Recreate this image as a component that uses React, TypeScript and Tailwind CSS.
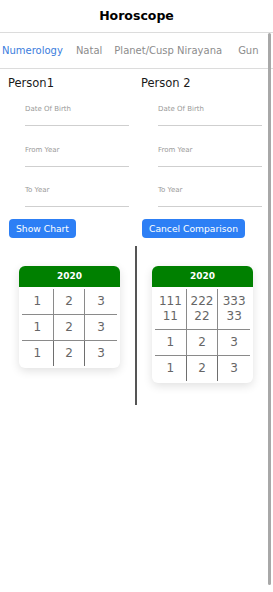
import React from "react";

// campos do formulário de cada pessoa
const campos = ["Date Of Birth", "From Year", "To Year"];

const Campo = ({ label, mt }: { label: string; mt: string }) => (
  <div className={`${mt} ml-[25px] mr-[4px] border-b border-[#cfcfcf] pb-[11px]`}>
    <div className="text-[7px] leading-[9px] text-[#9a9a9a]">{label}</div>
  </div>
);

const Pessoa = ({ nome, botao }: { nome: string; botao: string }) => (
  <div className="pl-[8px] pt-[7px]">
    <div className="text-[11.5px] leading-[14px] text-[#1a1a1a]">{nome}</div>
    <div className="-ml-[8px]">
      <Campo label={campos[0]} mt="mt-[15px]" />
      <Campo label={campos[1]} mt="mt-[20px]" />
      <Campo label={campos[2]} mt="mt-[19px]" />
    </div>
    <button className="mt-[12px] ml-[1px] h-[19px] rounded-[4px] bg-[#2d7ff5] px-[7px] text-[9.2px] leading-[19px] text-white">
      {botao}
    </button>
  </div>
);

// cartão com a grade numerológica
const Cartao = ({ linhas }: { linhas: string[][] }) => (
  <div className="w-[101px] overflow-hidden rounded-[6px] bg-white shadow-[0_3px_10px_rgba(0,0,0,0.12)]">
    <div className="flex h-[21px] items-center justify-center bg-[#008000] text-[9px] font-bold text-white">
      2020
    </div>
    <div className="grid grid-cols-3 px-[3px] pt-[2px] pb-[2px]">
      {linhas.map((linha, i) =>
        linha.map((valor, j) => (
          <div
            key={`${i}-${j}`}
            className={`flex items-center justify-center break-all px-[3px] py-[5px] text-center text-[12px] leading-[15px] text-[#666] ${
              j < 2 ? "border-r border-[#6e6e6e]" : ""
            } ${i < linha.length - 1 ? "border-b border-[#8a8a8a]" : ""}`}
          >
            {valor}
          </div>
        ))
      )}
    </div>
  </div>
);

export default function App() {
  const abas = ["Numerology", "Natal", "Planet/Cusp Nirayana", "Gun"];
  return (
    <div
      className="relative h-[592px] w-[273px] overflow-hidden bg-white"
      style={{ fontFamily: '"DejaVu Sans", sans-serif' }}
    >
      {/* Cabeçalho */}
      <header className="flex h-[33px] items-center justify-center border-b border-[#dcdcdc]">
        <h1 className="text-[12.5px] font-bold text-black">Horoscope</h1>
      </header>

      {/* Abas */}
      <nav className="flex h-[36px] items-center gap-[12px] border-b border-[#dcdcdc] pl-[2px] text-[10px] whitespace-nowrap">
        {abas.map((aba, i) => (
          <span
            key={aba}
            className={`${i === 0 ? "text-[#3b7ddd]" : "text-[#8c8c8c]"} ${i === 1 ? "ml-[1px]" : ""} ${i === 3 ? "ml-[4px]" : ""}`}
          >
            {aba}
          </span>
        ))}
      </nav>

      {/* Pessoas */}
      <div className="grid w-[266px] grid-cols-2">
        <Pessoa nome="Person1" botao="Show Chart" />
        <Pessoa nome="Person 2" botao="Cancel Comparison" />
      </div>

      {/* Gráficos */}
      <div className="mt-[7px] flex w-[266px]">
        <div className="w-[135px] pt-[20px] pl-[19px]">
          <Cartao
            linhas={[
              ["1", "2", "3"],
              ["1", "2", "3"],
              ["1", "2", "3"],
            ]}
          />
        </div>
        <div className="h-[159px] w-[2px] bg-[#555]" />
        <div className="pt-[20px] pl-[15px]">
          <Cartao
            linhas={[
              ["11111", "22222", "33333"],
              ["1", "2", "3"],
              ["1", "2", "3"],
            ]}
          />
        </div>
      </div>

      {/* Barra de rolagem */}
      <div className="absolute top-[33px] right-[2px] h-[552px] w-[3px] rounded-full bg-[#a8a8a8]" />
    </div>
  );
}
